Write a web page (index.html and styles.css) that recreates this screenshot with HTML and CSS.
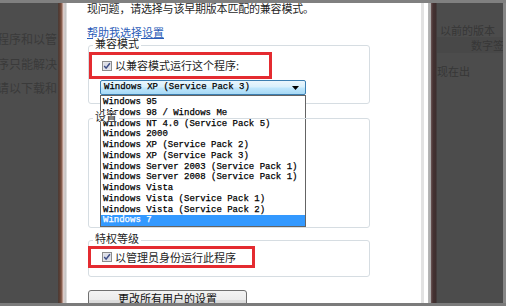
FILE: index.html
```html
<!DOCTYPE html>
<html lang="zh-CN">
<head>
<meta charset="utf-8">
<title>兼容模式</title>
<link rel="stylesheet" href="styles.css">
</head>
<body>
<div class="topbar"></div>
<div class="main">
  <div class="bg-left">
    <span>程序和以管</span>
    <span>序只能解决</span>
    <span>请以下载和</span>
  </div>
  <div class="frame-left"></div>
  <div class="dialog">
    <div class="dlg-body">
      <p class="intro">现问题，请选择与该早期版本匹配的兼容模式。</p>
      <a class="help">帮助我选择设置</a>
      <div class="group g1">
        <span class="legend">兼容模式</span>
        <div class="mark m1">
          <svg class="cb" width="10" height="10" viewBox="0 0 10 10"><rect x=".5" y=".5" width="9" height="9" fill="#e9e9ee" stroke="#8c8c8c"/><rect x="1.5" y="1.5" width="7" height="7" fill="#dcdde6"/><path d="M2.2 5.1 L4.1 7.2 L7.9 2.3" stroke="#3d4d86" stroke-width="1.5" fill="none"/></svg>
          <span>以兼容模式运行这个程序:</span>
        </div>
        <div class="combo">
          <div class="combo-field"><span>Windows XP (Service Pack 3)</span><svg width="7" height="4" viewBox="0 0 7 4"><polygon points="0,0 7,0 3.5,4" fill="#000"/></svg></div>
          <ul class="combo-list">
            <li>Windows 95</li>
            <li>Windows 98 / Windows Me</li>
            <li>Windows NT 4.0 (Service Pack 5)</li>
            <li>Windows 2000</li>
            <li>Windows XP (Service Pack 2)</li>
            <li>Windows XP (Service Pack 3)</li>
            <li>Windows Server 2003 (Service Pack 1)</li>
            <li>Windows Server 2008 (Service Pack 1)</li>
            <li>Windows Vista</li>
            <li>Windows Vista (Service Pack 1)</li>
            <li>Windows Vista (Service Pack 2)</li>
            <li class="sel">Windows 7</li>
          </ul>
        </div>
      </div>
      <div class="group g2">
        <span class="legend">设置</span>
      </div>
      <div class="group g3">
        <span class="legend">特权等级</span>
        <div class="mark m2">
          <svg class="cb" width="10" height="10" viewBox="0 0 10 10"><rect x=".5" y=".5" width="9" height="9" fill="#e9e9ee" stroke="#8c8c8c"/><rect x="1.5" y="1.5" width="7" height="7" fill="#dcdde6"/><path d="M2.2 5.1 L4.1 7.2 L7.9 2.3" stroke="#3d4d86" stroke-width="1.5" fill="none"/></svg>
          <span>以管理员身份运行此程序</span>
        </div>
      </div>
      <button class="btn">更改所有用户的设置</button>
    </div>
    <div class="dlg-edge"></div>
    <div class="dlg-margin"></div>
  </div>
  <div class="frame-right"></div>
  <div class="bg-right">
    <span class="r1">以前的版本</span>
    <div class="r2"><i class="vline"></i><span>数字签</span></div>
    <span class="r3">现在出</span>
  </div>
</div>
<div class="bottombar"></div>
</body>
</html>
```
FILE: styles.css
```css
html, body {
  margin: 0;
  padding: 0;
}
body {
  width: 506px;
  height: 306px;
  overflow: hidden;
  background: #4c4c4c;
  font-family: "Noto Sans CJK SC", "Noto Sans", sans-serif;
  font-size: 11px;
  color: #1f1f1f;
}
.topbar {
  height: 3px;
  background: #808080;
}
.bottombar {
  height: 3px;
  background: #7b7b7b;
}
.main {
  display: flex;
  height: 300px;
  overflow: hidden;
}
.bg-left {
  width: 58px;
  flex: none;
  background: #4d4d4d;
  display: flex;
  flex-direction: column;
  gap: 12.5px;
  padding-top: 30px;
  box-sizing: border-box;
  overflow: hidden;
  color: #3a3a3a;
  font-size: 12px;
  line-height: 12px;
  white-space: nowrap;
}
.bg-left span {
  margin-left: -3px;
}
.frame-left {
  width: 9px;
  flex: none;
  background: linear-gradient(to right, #4a3a35 0, #5e4034 2px, #7a5040 3px, #946a5a 4px, #d2bcb6 5px, #e2d8d6 6px, #bcbcbc 7px, #cfcfcf 8px, #efefef 9px);
}
.dialog {
  width: 361px;
  flex: none;
  display: flex;
  background: #fff;
}
.dlg-body {
  width: 354px;
  padding-left: 20px;
  box-sizing: border-box;
  display: flex;
  flex-direction: column;
  align-items: flex-start;
}
.dlg-body > * {
  flex: none;
}
.dlg-edge {
  width: 3px;
  background: #e2e2e2;
}
.dlg-margin {
  width: 4px;
}
.intro {
  margin: 0;
  line-height: 11px;
  letter-spacing: -0.2px;
  white-space: nowrap;
}
.help {
  display: block;
  margin-top: 13px;
  line-height: 11px;
  color: #2b5cb8;
  text-decoration: underline;
  text-underline-offset: 1px;
}
.group {
  position: relative;
  margin-top: 14px;
  margin-left: 1px;
  width: 282px;
  box-sizing: border-box;
  border: 1px solid #d6dde2;
  border-radius: 3px;
}
.legend {
  position: absolute;
  top: -8px;
  left: 4px;
  padding: 0 2px;
  background: #fff;
  line-height: 11px;
}
.g1 {
  margin-top: 7px;
  height: 59px;
}
.g2 {
  height: 110px;
}
.g3 {
  margin-top: 12px;
  height: 37px;
}
.mark {
  box-sizing: border-box;
  border: 3px solid #e42b30;
  display: flex;
  align-items: center;
  gap: 3px;
  line-height: 11px;
  white-space: nowrap;
}
.m1 {
  margin-top: 6px;
  width: 183px;
  height: 27px;
  padding-left: 10px;
}
.m2 {
  margin-top: 5px;
  margin-left: -1px;
  width: 167px;
  height: 22px;
  padding-left: 11px;
}
.cb {
  flex: none;
}
.combo {
  position: relative;
  margin-top: 1px;
  margin-left: 11px;
  width: 206px;
  height: 15px;
  font-family: "Liberation Mono", monospace;
  font-size: 9px;
  -webkit-text-stroke: 0.25px currentColor;
}
.combo-field {
  box-sizing: border-box;
  height: 15px;
  border: 1px solid #3c7fb1;
  border-radius: 2px;
  background: linear-gradient(#eaf6fd 0, #d9f0fc 45%, #bee6fd 55%, #a7d9f5 100%);
  display: flex;
  align-items: center;
  justify-content: space-between;
  padding: 0 6px 0 3px;
  line-height: 13px;
  color: #000;
}
.combo-list {
  position: absolute;
  top: 15px;
  left: 0;
  width: 206px;
  box-sizing: border-box;
  margin: 0;
  padding: 1px 0 0;
  list-style: none;
  background: #fff;
  border: 1px solid #646464;
  color: #000;
}
.combo-list li {
  height: 10.75px;
  line-height: 10.75px;
  padding-left: 2px;
  white-space: nowrap;
}
.combo-list li.sel {
  background: #3399ff;
  color: #fff;
}
.btn {
  margin-top: 13px;
  margin-left: 1px;
  width: 159px;
  height: 20px;
  box-sizing: border-box;
  border: 1px solid #707070;
  border-radius: 3px;
  background: linear-gradient(#f3f3f3 0, #ebebeb 50%, #dddddd 50%, #cfcfcf 100%);
  font-family: "Noto Sans CJK SC", sans-serif;
  font-size: 11px;
  line-height: 11px;
  padding: 0 0 4px;
  color: #111;
}
.frame-right {
  width: 9px;
  flex: none;
  background: linear-gradient(to right, #b8b8b8 0, #a9a9a9 3px, #6b5656 3px, #453232 5px, #3d2e2e 8px, #4a4a4a 9px);
}
.bg-right {
  flex: 1;
  background: #4c4c4c;
  border-right: 3px solid #868686;
  display: flex;
  flex-direction: column;
  align-items: flex-start;
  padding-top: 21px;
  color: #373737;
  font-size: 11px;
  line-height: 12px;
  white-space: nowrap;
  overflow: hidden;
}
.r1 {
  margin-left: 3px;
}
.r2 {
  margin-top: 1px;
  height: 16px;
  width: 100%;
  display: flex;
  align-items: center;
  background: #484848;
}
.vline {
  display: block;
  width: 1px;
  height: 12px;
  margin-left: 19px;
  background: #3a3a3a;
}
.r2 span {
  margin-left: 15px;
}
.r3 {
  margin-top: 12px;
}
```
